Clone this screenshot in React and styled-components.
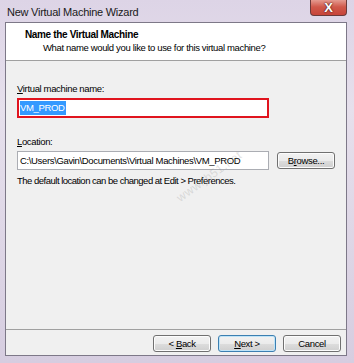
import styled, { createGlobalStyle } from "styled-components";

const GlobalStyle = createGlobalStyle`
  html, body {
    margin: 0;
    padding: 0;
    background: #ffffff;
  }
  * {
    box-sizing: border-box;
  }
`;

const Window = styled.div`
  position: relative;
  width: 354px;
  height: 363px;
  display: flex;
  flex-direction: column;
  background: linear-gradient(180deg, #ddd4e6 0%, #e6e0ec 30%, #d6cde0 100%);
  font-family: "Liberation Sans", Arial, sans-serif;
  font-size: 9.5px;
  letter-spacing: -0.35px;
  color: #000;
  overflow: hidden;
`;

const TitleBar = styled.div`
  height: 22px;
  display: flex;
  justify-content: space-between;
  align-items: flex-start;
  padding: 0 7px 0 7px;
`;

const Title = styled.div`
  font-size: 11px;
  letter-spacing: -0.25px;
  line-height: 24px;
  color: #1a1a1a;
`;

const CloseButton = styled.div`
  width: 37px;
  height: 17px;
  margin-top: -1px;
  border: 1px solid #6b3a3a;
  border-top: none;
  border-radius: 0 0 4px 4px;
  background: linear-gradient(180deg, #e8a49a 0%, #d0584a 50%, #c7443a 100%);
  display: flex;
  align-items: center;
  justify-content: center;
  color: #fff;
  font-weight: bold;
  font-size: 13px;
  letter-spacing: 0;
  text-shadow: 0 0 2px #4a1a1a, 0 0 1px #4a1a1a;
`;

const Client = styled.div`
  flex: 1;
  margin: 0 7px 7px 5px;
  border: 1px solid #7d7888;
  display: flex;
  flex-direction: column;
  background: #f0f0f0;
`;

const Header = styled.div`
  background: #fff;
  height: 38px;
  padding: 5px 0 0 19px;
  border-bottom: 1px solid #a0a0a0;
`;

const HeaderTitle = styled.div`
  font-weight: bold;
  font-size: 10px;
  line-height: 13px;
`;

const HeaderSub = styled.div`
  padding-left: 18px;
  line-height: 14px;
`;

const Body = styled.div`
  flex: 1;
  padding: 21px 11px 0 11px;
  display: flex;
  flex-direction: column;
`;

const Label = styled.div`
  line-height: 14px;
  margin-bottom: 2px;
  margin-top: ${(p) => p.$top || 0}px;
`;

const Row = styled.div`
  display: flex;
  align-items: center;
  gap: 8px;
`;

const TextField = styled.div`
  width: 252px;
  height: ${(p) => (p.$focused ? 20 : 19)}px;
  border: ${(p) => (p.$focused ? "2px solid #e0141e" : "1px solid #abadb3")};
  background: #fff;
  display: flex;
  align-items: center;
  padding-left: ${(p) => (p.$focused ? 1 : 2)}px;
  white-space: nowrap;
  overflow: hidden;
`;

const Selected = styled.span`
  background: #3399ff;
  color: #fff;
  line-height: 14px;
  padding-right: 1px;
`;

const Button = styled.div`
  width: 58px;
  height: 17px;
  border: 1px solid ${(p) => (p.$default ? "#3c7fb1" : "#707070")};
  border-radius: 3px;
  background: linear-gradient(180deg, #f2f2f2 0%, #ebebeb 50%, #dddddd 51%, #cfcfcf 100%);
  display: flex;
  align-items: center;
  justify-content: center;
  line-height: 14px;
  box-shadow: ${(p) => (p.$default ? "inset 0 0 0 1px #bfe4f8" : "inset 0 0 0 1px #fcfcfc")};
`;

const Hint = styled.div`
  margin-top: 4px;
  line-height: 14px;
  letter-spacing: -0.5px;
`;

const Footer = styled.div`
  height: 26px;
  border-top: 1px solid #a0a0a0;
  display: flex;
  justify-content: flex-end;
  align-items: flex-start;
  gap: 7px;
  padding: 5px 5px 0 0;
`;

const Underline = styled.span`
  text-decoration: underline;
`;

const Watermark = styled.div`
  position: absolute;
  left: 178px;
  top: 192px;
  transform: rotate(-36deg);
  transform-origin: left center;
  font-size: 12px;
  color: rgba(140, 140, 140, 0.25);
  letter-spacing: 0.5px;
  pointer-events: none;
`;

export default function App() {
  return (
    <>
      <GlobalStyle />
      <Window>
        <TitleBar>
          <Title>New Virtual Machine Wizard</Title>
          <CloseButton>X</CloseButton>
        </TitleBar>
        <Client>
          <Header>
            <HeaderTitle>Name the Virtual Machine</HeaderTitle>
            <HeaderSub>What name would you like to use for this virtual machine?</HeaderSub>
          </Header>
          <Body>
            <Label>
              <Underline>V</Underline>irtual machine name:
            </Label>
            <TextField $focused>
              <Selected>VM_PROD</Selected>
            </TextField>
            <Label $top={17}>
              <Underline>L</Underline>ocation:
            </Label>
            <Row>
              <TextField>C:\Users\Gavin\Documents\Virtual Machines\VM_PROD</TextField>
              <Button>
                <span>
                  B<Underline>r</Underline>owse...
                </span>
              </Button>
            </Row>
            <Hint>The default location can be changed at Edit &gt; Preferences.</Hint>
          </Body>
          <Footer>
            <Button>
              <span>
                &lt; <Underline>B</Underline>ack
              </span>
            </Button>
            <Button $default>
              <span>
                <Underline>N</Underline>ext &gt;
              </span>
            </Button>
            <Button>Cancel</Button>
          </Footer>
        </Client>
        <Watermark>www.jb51.net</Watermark>
      </Window>
    </>
  );
}
